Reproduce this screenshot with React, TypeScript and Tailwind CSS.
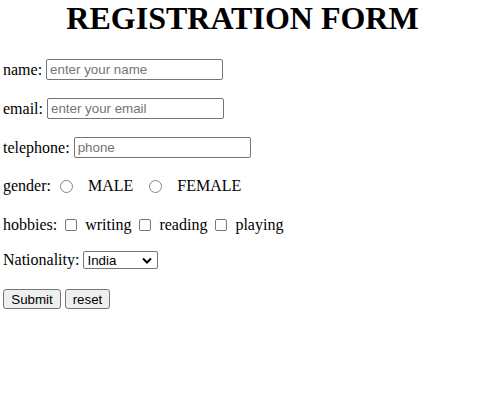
import React from "react";

function TextInput({ placeholder, className = "" }: { placeholder: string; className?: string }) {
  return (
    <input
      type="text"
      placeholder={placeholder}
      className={
        "box-border h-[21px] w-[177px] rounded-[2px] border border-[#767676] bg-white px-[3px] py-0 font-['Liberation_Sans',Arial,sans-serif] text-[13.33px] leading-[15px] text-black outline-none placeholder:text-[#757575] " +
        className
      }
    />
  );
}

function Radio({ className = "" }: { className?: string }) {
  return (
    <span
      className={
        "box-border inline-block h-[13px] w-[13px] shrink-0 rounded-full border border-[#858585] bg-white " +
        className
      }
    />
  );
}

function Checkbox({ className = "" }: { className?: string }) {
  return (
    <span
      className={
        "box-border inline-block h-[12px] w-[12px] shrink-0 rounded-[2px] border border-[#767676] bg-white " +
        className
      }
    />
  );
}

export default function App() {
  return (
    <div className="min-h-[403px] w-[485px] bg-white font-['Liberation_Serif','Times_New_Roman',serif] text-[16px] text-black">
      <h1 className="m-0 h-[37px] text-center text-[32px] font-bold leading-[37px]">
        REGISTRATION FORM
      </h1>

      <div className="pl-[3px]">
        <div className="mt-[22px] flex h-[21px] items-center leading-[18px]">
          <span>name:</span>
          <TextInput placeholder="enter your name" className="ml-[4px]" />
        </div>

        <div className="mt-[18px] flex h-[21px] items-center leading-[18px]">
          <span>email:</span>
          <TextInput placeholder="enter your email" className="ml-[4px]" />
        </div>

        <div className="mt-[18px] flex h-[21px] items-center leading-[18px]">
          <span>telephone:</span>
          <TextInput placeholder="phone" className="ml-[4px]" />
        </div>

        <div className="mt-[17px] flex h-[21px] items-center leading-[18px]">
          <span>gender:</span>
          <Radio className="ml-[9px] mt-[1px]" />
          <span className="ml-[15px]">MALE</span>
          <Radio className="ml-[16px] mt-[1px]" />
          <span className="ml-[15px]">FEMALE</span>
        </div>

        <div className="mt-[18px] flex h-[21px] items-center leading-[18px]">
          <span>hobbies:</span>
          <Checkbox className="ml-[8px]" />
          <span className="ml-[8px]">writing</span>
          <Checkbox className="ml-[8px]" />
          <span className="ml-[8px]">reading</span>
          <Checkbox className="ml-[8px]" />
          <span className="ml-[8px]">playing</span>
        </div>

        <div className="mt-[15px] flex h-[20px] items-center leading-[18px]">
          <span>Nationality:</span>
          <div className="ml-[4px] box-border flex h-[18px] w-[75px] items-center justify-between rounded-[2px] border border-[#767676] bg-white pl-[3px] pr-[4px] font-['Liberation_Sans',Arial,sans-serif] text-[13.33px] leading-[15px]">
            <span>India</span>
            <svg width="10" height="7" viewBox="0 0 10 7" className="mr-[1px]">
              <polyline points="1,1.5 5,5.5 9,1.5" fill="none" stroke="#000" strokeWidth="2" />
            </svg>
          </div>
        </div>

        <div className="mt-[19px] flex h-[20px] items-center gap-[4px]">
          <button
            type="button"
            className="box-border h-[20px] w-[58px] rounded-[3px] border border-[#767676] bg-[#efefef] p-0 font-['Liberation_Sans',Arial,sans-serif] text-[13.33px] leading-[15px] text-black"
          >
            Submit
          </button>
          <button
            type="button"
            className="box-border h-[20px] w-[45px] rounded-[3px] border border-[#767676] bg-[#efefef] p-0 font-['Liberation_Sans',Arial,sans-serif] text-[13.33px] leading-[15px] text-black"
          >
            reset
          </button>
        </div>
      </div>
    </div>
  );
}
